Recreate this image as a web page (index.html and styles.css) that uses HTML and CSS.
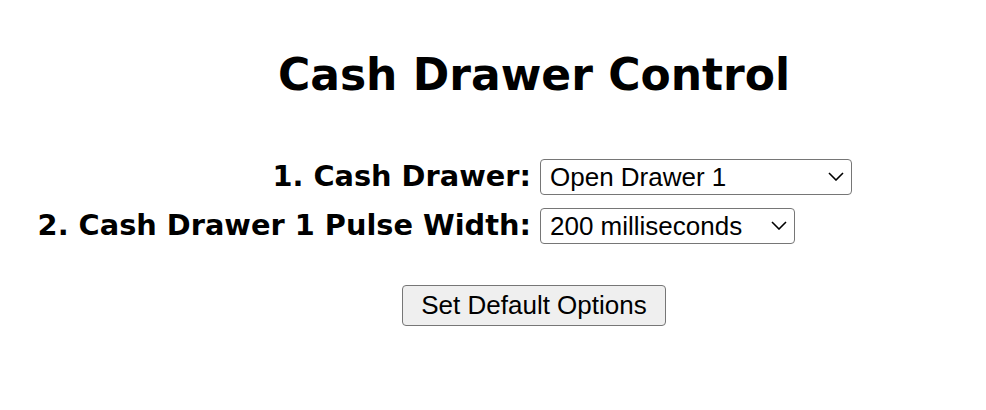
FILE: index.html
```html
<!DOCTYPE html>
<html lang="en">
<head>
<meta charset="utf-8">
<title>Cash Drawer Control</title>
<link rel="stylesheet" href="styles.css">
</head>
<body>
<div class="page">
  <h1 class="title">Cash Drawer Control</h1>
  <form class="form">
    <div class="grid">
      <label class="label" for="drawer">1. Cash Drawer:</label>
      <div class="select-wrap wide">
        <select id="drawer" class="select">
          <option>Open Drawer 1</option>
          <option>Open Drawer 2</option>
        </select>
        <svg class="chev" viewBox="0 0 16 9" width="16" height="9" aria-hidden="true"><path d="M1 1 L8 8 L15 1" fill="none" stroke="#000" stroke-width="1.6"/></svg>
      </div>
      <label class="label" for="pulse">2. Cash Drawer 1 Pulse Width:</label>
      <div class="select-wrap narrow">
        <select id="pulse" class="select">
          <option>200 milliseconds</option>
          <option>100 milliseconds</option>
        </select>
        <svg class="chev" viewBox="0 0 16 9" width="16" height="9" aria-hidden="true"><path d="M1 1 L8 8 L15 1" fill="none" stroke="#000" stroke-width="1.6"/></svg>
      </div>
    </div>
    <div class="actions">
      <button type="button" class="btn">Set Default Options</button>
    </div>
  </form>
</div>
</body>
</html>
```
FILE: styles.css
```css
html, body {
  margin: 0;
  padding: 0;
  background: #fff;
  color: #000;
}
body {
  font-family: "DejaVu Sans", "Noto Sans", sans-serif;
}
.page {
  padding-top: 45px;
}
.title {
  margin: 0 0 0 82px;
  width: 904px;
  text-align: center;
  font-size: 44px;
  font-weight: bold;
  line-height: 60px;
}
.form {
  margin: 0;
}
.grid {
  margin-top: 54px;
  margin-left: 39px;
  display: grid;
  grid-template-columns: 492px auto;
  column-gap: 9px;
  row-gap: 13px;
  align-items: center;
  justify-items: start;
}
.label {
  justify-self: end;
  font-size: 28.8px;
  font-weight: bold;
  white-space: nowrap;
  margin-top: -2px;
}
.select-wrap {
  position: relative;
  height: 36px;
}
.wide { width: 312px; }
.narrow { width: 255px; }
.select {
  -webkit-appearance: none;
  appearance: none;
  box-sizing: border-box;
  width: 100%;
  height: 36px;
  margin: 0;
  padding: 0 30px 0 9px;
  border: 1.5px solid #767676;
  border-radius: 4px;
  background: #fff;
  color: #000;
  font-family: "Liberation Sans", Arial, sans-serif;
  font-size: 26px;
}
.chev {
  position: absolute;
  right: 8px;
  top: 13px;
  pointer-events: none;
}
.actions {
  margin-top: 41px;
  margin-left: 82px;
  width: 904px;
  text-align: center;
}
.btn {
  box-sizing: border-box;
  height: 41px;
  padding: 0 18px;
  border: 1.5px solid #767676;
  border-radius: 4px;
  background: #efefef;
  color: #000;
  font-family: "Liberation Sans", Arial, sans-serif;
  font-size: 26px;
}
```
